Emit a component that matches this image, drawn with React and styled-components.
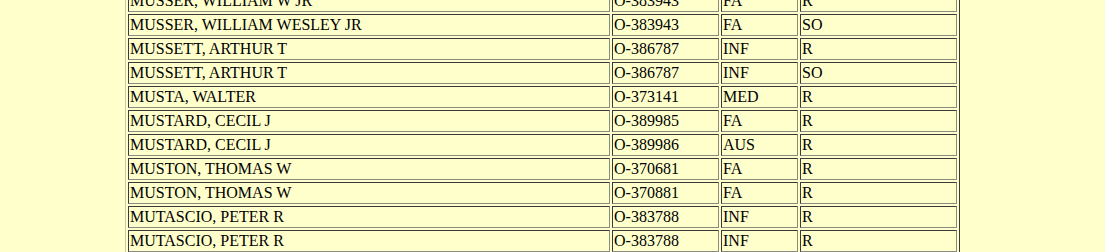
import React from "react";
import styled, { createGlobalStyle } from "styled-components";

const GlobalStyle = createGlobalStyle`
  html, body {
    margin: 0;
    background: #ffffcc;
    overflow: hidden;
  }
  body {
    font-family: "Liberation Serif", "Times New Roman", serif;
    font-size: 16px;
    color: #000;
  }
`;

const RosterTable = styled.table`
  margin: -13px 0 0 125px;
  width: 835px;
  table-layout: fixed;
  border-collapse: separate;
  border-spacing: 2px;
  border: 1px solid;
  border-color: #c8c8b0 #3a3a3a #3a3a3a #c8c8b0;
`;

const Cell = styled.td`
  box-sizing: border-box;
  width: ${(p) => p.$w}px;
  height: 22px;
  padding: 1px;
  line-height: 18px;
  border: 1px solid;
  border-color: #3a3a3a #8a8a80 #8a8a80 #3a3a3a;
  white-space: nowrap;
  overflow: hidden;
  vertical-align: middle;
`;

const widths = [482, 107, 77, 157];

const rows = [
  ["MUSSER, WILLIAM W JR", "O-383943", "FA", "R"],
  ["MUSSER, WILLIAM WESLEY JR", "O-383943", "FA", "SO"],
  ["MUSSETT, ARTHUR T", "O-386787", "INF", "R"],
  ["MUSSETT, ARTHUR T", "O-386787", "INF", "SO"],
  ["MUSTA, WALTER", "O-373141", "MED", "R"],
  ["MUSTARD, CECIL J", "O-389985", "FA", "R"],
  ["MUSTARD, CECIL J", "O-389986", "AUS", "R"],
  ["MUSTON, THOMAS W", "O-370681", "FA", "R"],
  ["MUSTON, THOMAS W", "O-370881", "FA", "R"],
  ["MUTASCIO, PETER R", "O-383788", "INF", "R"],
  ["MUTASCIO, PETER R", "O-383788", "INF", "R"],
];

export default function App() {
  return (
    <>
      <GlobalStyle />
      <RosterTable>
        <tbody>
          {rows.map((r, i) => (
            <tr key={i}>
              {r.map((c, j) => (
                <Cell key={j} $w={widths[j]}>
                  {c}
                </Cell>
              ))}
            </tr>
          ))}
        </tbody>
      </RosterTable>
    </>
  );
}
